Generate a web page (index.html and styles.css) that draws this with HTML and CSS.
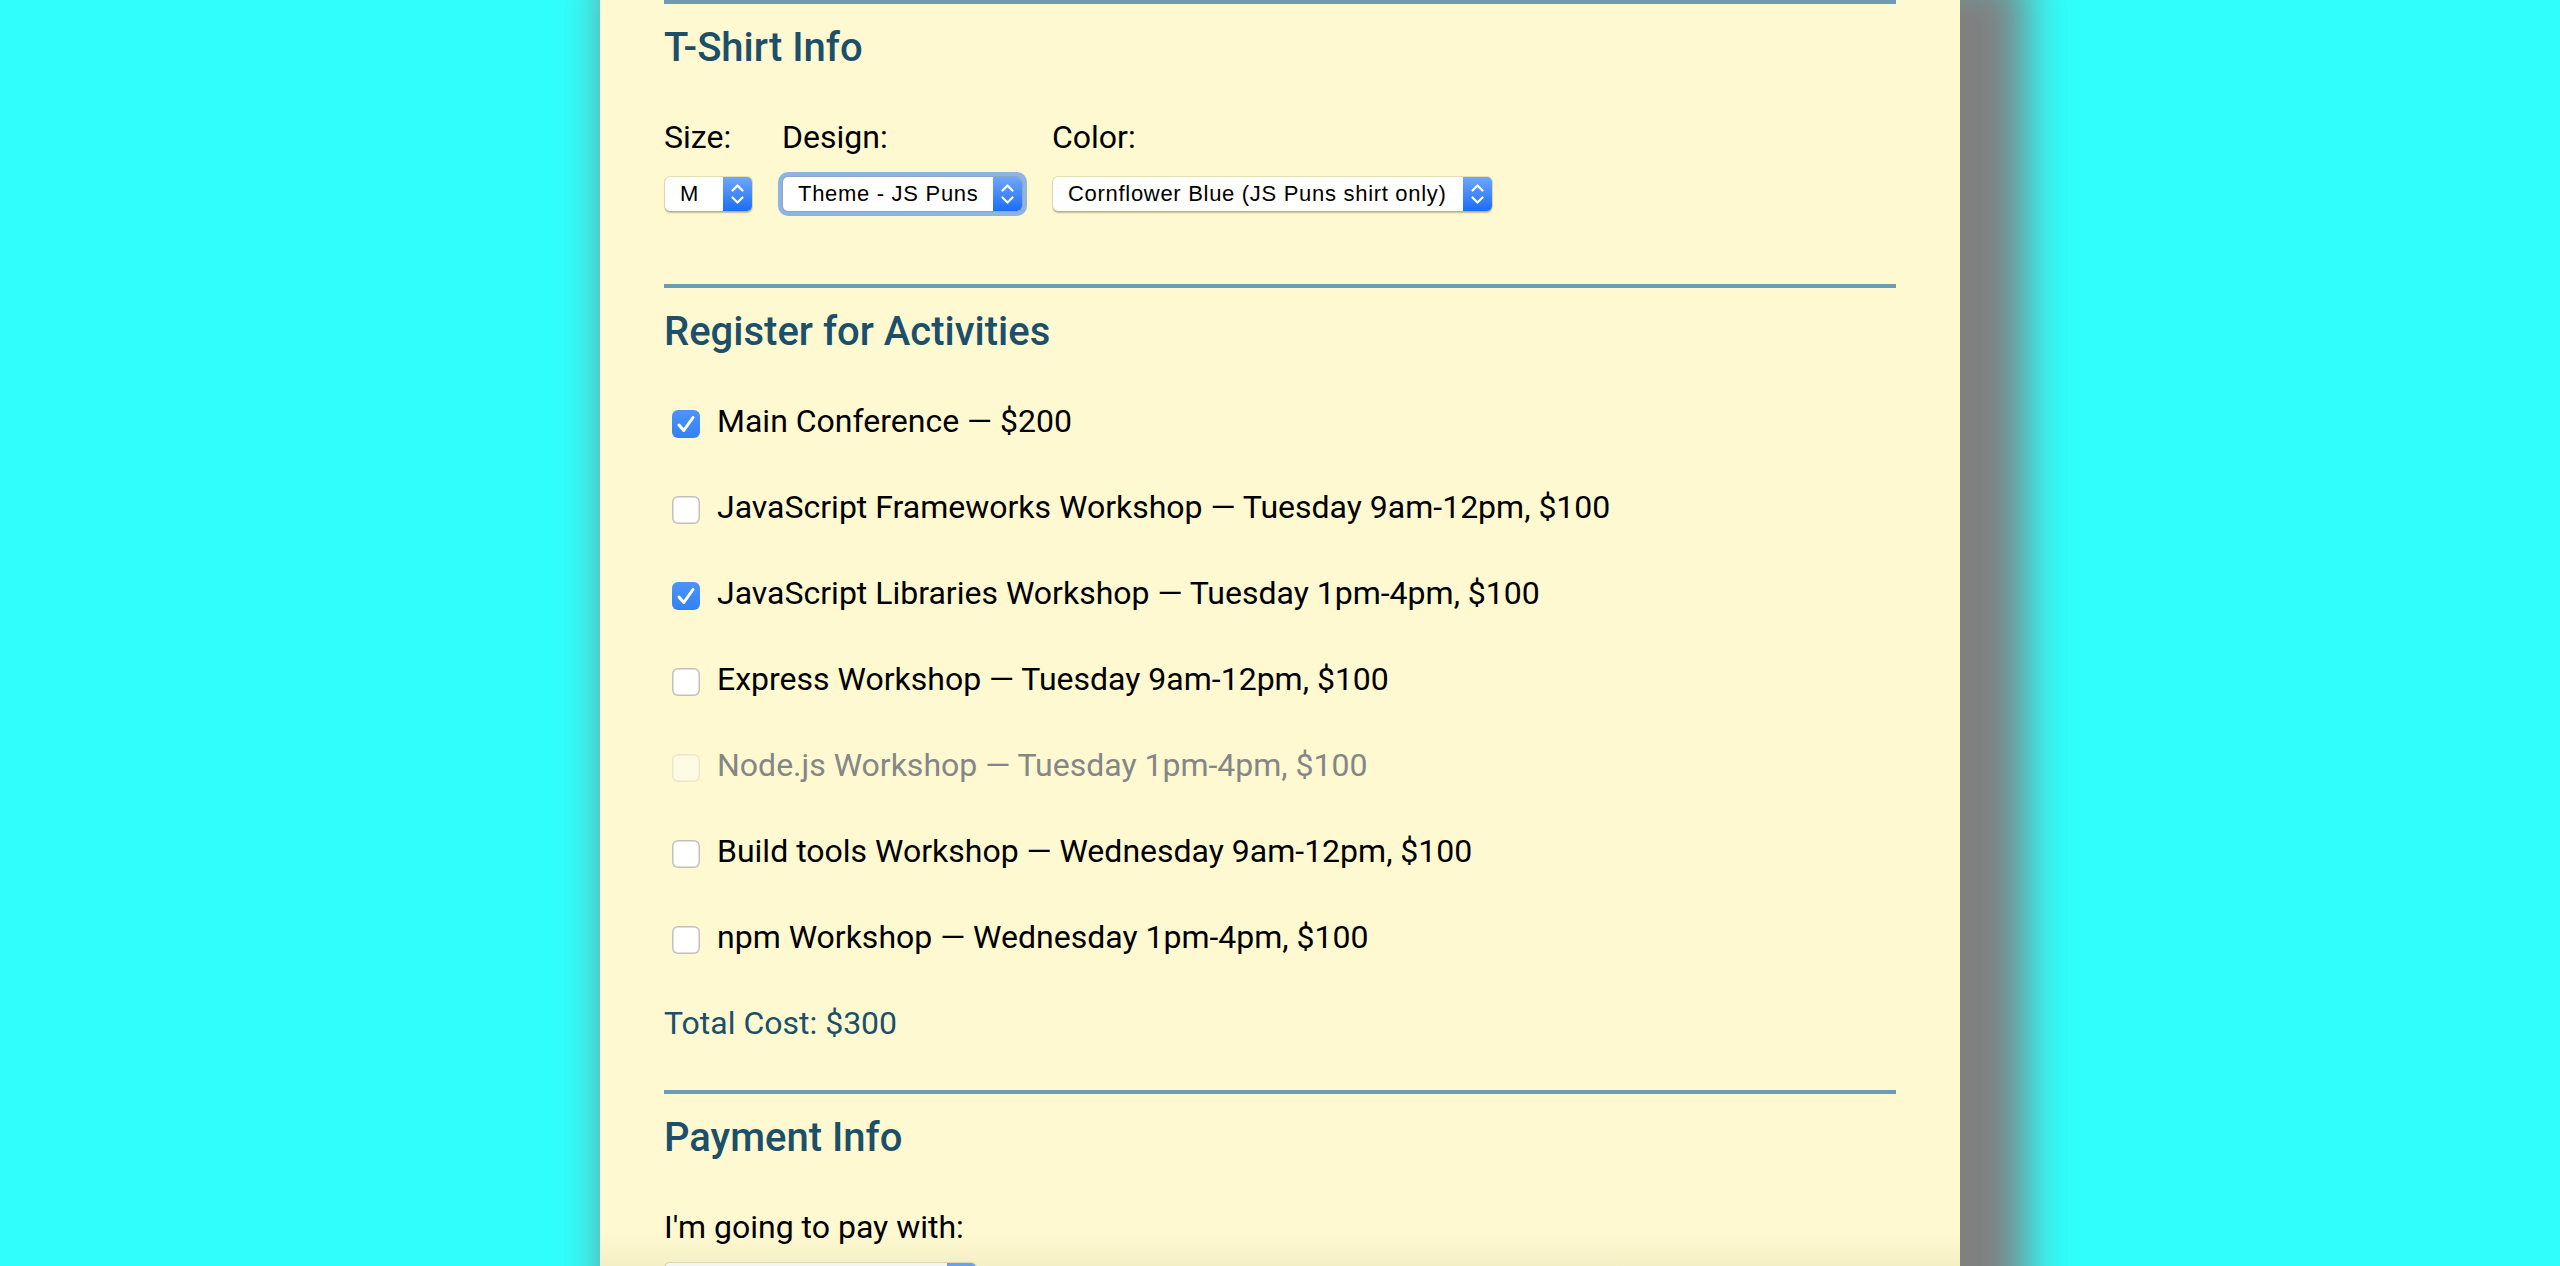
FILE: index.html
```html
<!DOCTYPE html>
<html lang="en">
<head>
<meta charset="utf-8">
<title>Conference Registration</title>
<link rel="stylesheet" href="styles.css">
</head>
<body>
<main class="page">
  <form class="form">
    <section class="section shirt">
      <h2 class="section-title">T-Shirt Info</h2>
      <div class="shirt-fields">
        <div class="field">
          <label class="field-label">Size:</label>
          <div class="select-box select-size">
            <span class="select-value">M</span>
            <span class="select-arrow"><svg viewBox="0 0 29 34" width="29" height="34"><path d="M9.5 13.5 L14.5 8.5 L19.5 13.5 M9.5 20.5 L14.5 25.5 L19.5 20.5" fill="none" stroke="#fff" stroke-width="2.2" stroke-linecap="round" stroke-linejoin="round"/></svg></span>
          </div>
        </div>
        <div class="field">
          <label class="field-label">Design:</label>
          <div class="select-box select-design is-focused">
            <span class="select-value">Theme - JS Puns</span>
            <span class="select-arrow"><svg viewBox="0 0 29 34" width="29" height="34"><path d="M9.5 13.5 L14.5 8.5 L19.5 13.5 M9.5 20.5 L14.5 25.5 L19.5 20.5" fill="none" stroke="#fff" stroke-width="2.2" stroke-linecap="round" stroke-linejoin="round"/></svg></span>
          </div>
        </div>
        <div class="field">
          <label class="field-label">Color:</label>
          <div class="select-box select-color">
            <span class="select-value">Cornflower Blue (JS Puns shirt only)</span>
            <span class="select-arrow"><svg viewBox="0 0 29 34" width="29" height="34"><path d="M9.5 13.5 L14.5 8.5 L19.5 13.5 M9.5 20.5 L14.5 25.5 L19.5 20.5" fill="none" stroke="#fff" stroke-width="2.2" stroke-linecap="round" stroke-linejoin="round"/></svg></span>
          </div>
        </div>
      </div>
    </section>

    <section class="section activities">
      <h2 class="section-title">Register for Activities</h2>
      <ul class="activity-list">
        <li class="activity">
          <span class="check is-checked"><svg viewBox="0 0 28 28" width="28" height="28"><path d="M7 15 L11.8 20.5 L21 7.5" fill="none" stroke="#fff" stroke-width="3" stroke-linecap="round" stroke-linejoin="round"/></svg></span>
          <span class="activity-text">Main Conference — $200</span>
        </li>
        <li class="activity">
          <span class="check"></span>
          <span class="activity-text">JavaScript Frameworks Workshop — Tuesday 9am-12pm, $100</span>
        </li>
        <li class="activity">
          <span class="check is-checked"><svg viewBox="0 0 28 28" width="28" height="28"><path d="M7 15 L11.8 20.5 L21 7.5" fill="none" stroke="#fff" stroke-width="3" stroke-linecap="round" stroke-linejoin="round"/></svg></span>
          <span class="activity-text">JavaScript Libraries Workshop — Tuesday 1pm-4pm, $100</span>
        </li>
        <li class="activity">
          <span class="check"></span>
          <span class="activity-text">Express Workshop — Tuesday 9am-12pm, $100</span>
        </li>
        <li class="activity is-disabled">
          <span class="check"></span>
          <span class="activity-text">Node.js Workshop — Tuesday 1pm-4pm, $100</span>
        </li>
        <li class="activity">
          <span class="check"></span>
          <span class="activity-text">Build tools Workshop — Wednesday 9am-12pm, $100</span>
        </li>
        <li class="activity">
          <span class="check"></span>
          <span class="activity-text">npm Workshop — Wednesday 1pm-4pm, $100</span>
        </li>
      </ul>
      <p class="total">Total Cost: $300</p>
    </section>

    <section class="section payment">
      <h2 class="section-title">Payment Info</h2>
      <div class="field payment-field">
        <label class="field-label">I'm going to pay with:</label>
        <div class="select-box select-payment" aria-label="Payment method">
          <span class="select-value"></span>
          <span class="select-arrow"><svg viewBox="0 0 29 34" width="29" height="34"><path d="M9.5 13.5 L14.5 8.5 L19.5 13.5 M9.5 20.5 L14.5 25.5 L19.5 20.5" fill="none" stroke="#fff" stroke-width="2.2" stroke-linecap="round" stroke-linejoin="round"/></svg></span>
        </div>
      </div>
    </section>
  </form>
</main>
<div class="bottom-fade"></div>
</body>
</html>
```

FILE: styles.css
```css
* {
  box-sizing: border-box;
}

html,
body {
  height: 100%;
  overflow: hidden;
}

body {
  margin: 0;
  background: #2ffffc;
  font-family: Roboto, "Liberation Sans", sans-serif;
  font-size: 32px;
  color: #000;
}

.page {
  width: 1360px;
  min-height: 100%;
  margin: 0 auto;
  padding: 0 64px;
  background: #fef9d1;
  box-shadow: 36px 0 42px 30px #808080;
}

.form {
  display: flex;
  flex-direction: column;
}

.section {
  border-top: 4px solid #6a9db4;
  padding-top: 20px;
}

.section-title {
  margin: 0 0 45px;
  font-size: 40px;
  line-height: 48px;
  font-weight: 500;
  color: #1c4f69;
}

/* T-shirt */
.shirt {
  padding-bottom: 73px;
}

.shirt-fields {
  display: flex;
  gap: 30px;
}

.field {
  display: flex;
  flex-direction: column;
  align-items: flex-start;
  gap: 20px;
}

.field-label {
  line-height: 40px;
}

.select-box {
  display: flex;
  height: 34px;
  margin-left: 1px;
  border-radius: 5px;
  background: #fff;
  box-shadow: 0 0 0 1px rgba(120, 110, 80, 0.18), 0 1.5px 1.5px rgba(90, 80, 40, 0.35);
  font-family: "Liberation Sans", Arial, sans-serif;
  font-size: 22px;
  letter-spacing: 0.7px;
  color: #000;
}

.select-value {
  flex: 1;
  padding-left: 15px;
  line-height: 34px;
  white-space: nowrap;
}

.select-arrow {
  flex: 0 0 29px;
  display: flex;
  border-radius: 0 5px 5px 0;
  background: linear-gradient(#6fa7fb, #1a6df8);
}

.select-size {
  width: 87px;
}

.select-design {
  width: 239px;
}

.select-color {
  width: 439px;
}

.select-payment {
  width: 311px;
}

.is-focused {
  box-shadow: 0 0 0 1px rgba(120, 110, 80, 0.18), 0 0 0 5px #8fb4e2;
}

/* Activities */
.activities {
  padding-bottom: 47px;
}

.activity-list {
  list-style: none;
  margin: 0;
  padding: 0;
  display: flex;
  flex-direction: column;
  gap: 46px;
}

.activity {
  display: flex;
  align-items: flex-start;
  gap: 17px;
  height: 40px;
  line-height: 40px;
}

.check {
  flex: 0 0 28px;
  width: 28px;
  height: 28px;
  margin: 9px 0 0 8px;
  border-radius: 6px;
  background: #fff;
  box-shadow: inset 0 0 0 1.5px #c2c0b8;
  display: flex;
}

.check.is-checked {
  background: linear-gradient(#4b94f8, #3581f5);
  box-shadow: none;
}

.is-disabled .check {
  background: #fefbe4;
  box-shadow: inset 0 0 0 1.5px #ece6cb;
}

.is-disabled .activity-text {
  color: #868686;
}

.total {
  margin: 46px 0 0;
  line-height: 40px;
  color: #1c4f69;
}

/* Payment */
.payment-field {
  gap: 16px;
}

.bottom-fade {
  position: fixed;
  left: calc(50% - 680px);
  bottom: 0;
  width: 1360px;
  height: 34px;
  background: linear-gradient(rgba(90, 80, 20, 0), rgba(90, 80, 20, 0.06));
  pointer-events: none;
}
```
